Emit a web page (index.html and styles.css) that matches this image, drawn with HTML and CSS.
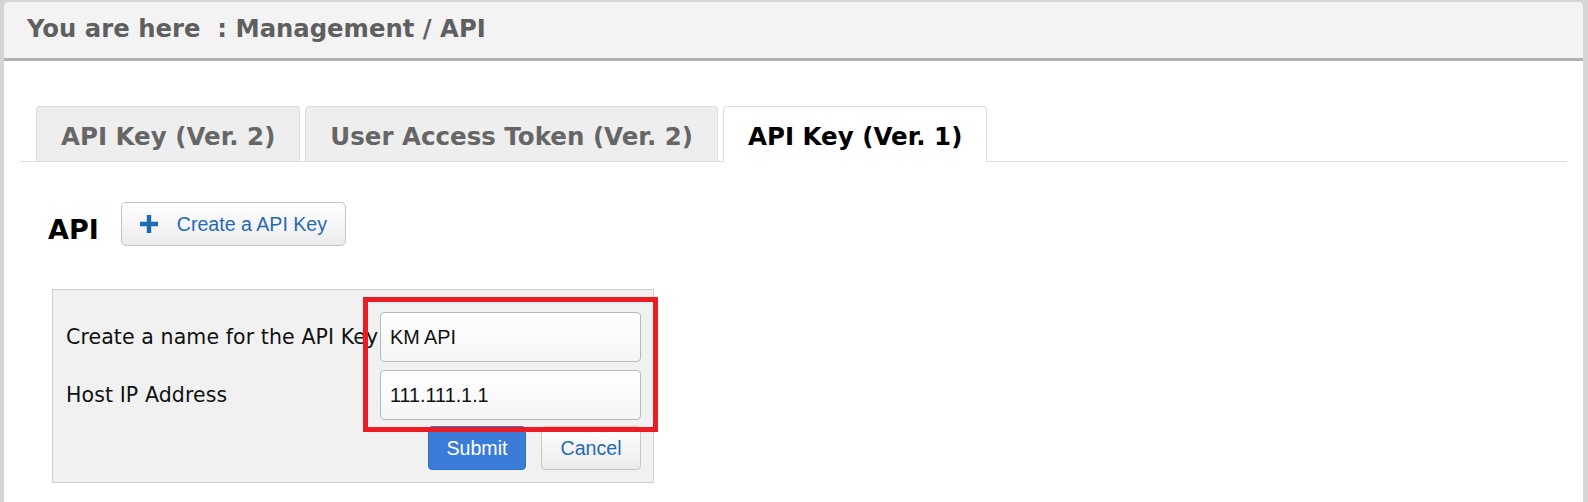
FILE: index.html
```html
<!DOCTYPE html>
<html lang="en">
<head>
<meta charset="utf-8">
<title>Management / API</title>
<link rel="stylesheet" href="styles.css">
</head>
<body>
<div class="frame">
  <div class="breadcrumb">You are here&nbsp; : Management / API</div>
  <div class="content">
    <ul class="tabs">
      <li class="tab">API Key (Ver. 2)</li>
      <li class="tab">User Access Token (Ver. 2)</li>
      <li class="tab active">API Key (Ver. 1)</li>
    </ul>
    <div class="section-head">
      <h2 class="section-title">API</h2>
      <button class="btn btn-create" type="button">
        <svg class="plus" width="18" height="18" viewBox="0 0 18 18" aria-hidden="true"><path d="M6.8 0h4.4v6.8H18v4.4h-6.8V18H6.8v-6.8H0V6.8h6.8z" fill="#1c6cb3"/></svg>
        <span>Create a API Key</span>
      </button>
    </div>
    <div class="form-box">
      <div class="form-grid">
        <label class="form-label" for="k-name">Create a name for the API Key</label>
        <input class="form-input" id="k-name" type="text" value="KM API">
        <label class="form-label" for="k-ip">Host IP Address</label>
        <input class="form-input" id="k-ip" type="text" value="111.111.1.1">
      </div>
      <div class="actions">
        <button class="btn btn-submit" type="button">Submit</button>
        <button class="btn btn-cancel" type="button">Cancel</button>
      </div>
      <div class="highlight"></div>
    </div>
  </div>
</div>
</body>
</html>
```

FILE: styles.css
```css
html, body {
  margin: 0;
  padding: 0;
}
body {
  background: #d5d5d5;
  font-family: "DejaVu Sans", Verdana, sans-serif;
  overflow: hidden;
}
.frame {
  margin: 2px 5px 0 4px;
  min-height: 500px;
  background: #ffffff;
  border-radius: 5px 5px 0 0;
}
.breadcrumb {
  height: 52px;
  padding: 1px 0 3px 23px;
  background: #f3f3f3;
  border-bottom: 3px solid #b3b3b3;
  border-radius: 5px 5px 0 0;
  color: #5f5f5f;
  font-size: 24.3px;
  font-weight: bold;
  line-height: 52px;
  white-space: pre;
}
.content {
  padding: 45px 16px 0 16px;
}
.tabs {
  display: flex;
  gap: 5px;
  margin: 0;
  padding: 0 0 0 16px;
  list-style: none;
  border-bottom: 1px solid #dddddd;
}
.tab {
  box-sizing: border-box;
  height: 55px;
  padding: 5px 24px 0 24px;
  background: #eeeeee;
  border: 1px solid #dddddd;
  border-bottom: none;
  border-radius: 4px 4px 0 0;
  color: #666666;
  font-size: 24.5px;
  font-weight: bold;
  line-height: 49px;
  white-space: nowrap;
}
.tab.active {
  height: 56px;
  margin-bottom: -1px;
  background: #ffffff;
  color: #000000;
}
.section-head {
  display: flex;
  align-items: flex-start;
  margin-top: 40px;
  padding-left: 28px;
}
.section-title {
  margin: 12px 22px 0 0;
  color: #000000;
  font-size: 27px;
  font-weight: bold;
  line-height: 32px;
}
.btn {
  box-sizing: border-box;
  font-family: "Liberation Sans", Arial, sans-serif;
  font-size: 19.6px;
  cursor: pointer;
}
.btn-create {
  display: flex;
  align-items: center;
  gap: 19px;
  height: 44px;
  padding: 0 18px 0 18px;
  background: linear-gradient(#ffffff, #ececec);
  border: 1px solid #c4c4c4;
  border-radius: 5px;
  color: #1f6bb5;
}
.plus {
  display: block;
  flex: none;
}
.form-box {
  position: relative;
  width: max-content;
  margin: 43px 0 0 32px;
  padding: 22px 12px 12px 13px;
  background: #f1f1f1;
  border: 1px solid #cfcfcf;
}
.form-grid {
  display: grid;
  grid-template-columns: 314px 261px;
  row-gap: 8px;
  align-items: center;
}
.form-label {
  color: #111111;
  font-size: 20.5px;
  letter-spacing: 0.1px;
  white-space: nowrap;
}
.form-input {
  box-sizing: border-box;
  width: 261px;
  height: 50px;
  margin: 0;
  padding: 0 0 0 9px;
  background: linear-gradient(#ffffff, #f5f5f5);
  border: 1px solid #b9b9b9;
  border-radius: 4px;
  color: #111111;
  font-family: "Liberation Sans", Arial, sans-serif;
  font-size: 19.8px;
  outline: none;
}
.actions {
  display: flex;
  justify-content: flex-end;
  gap: 15px;
  margin-top: 6px;
}
.btn-submit {
  width: 98px;
  height: 44px;
  background: #3b7cd8;
  border: 1px solid #3371c9;
  border-radius: 4px;
  color: #ffffff;
}
.btn-cancel {
  width: 100px;
  height: 44px;
  background: linear-gradient(#ffffff, #ebebeb);
  border: 1px solid #c6c6c6;
  border-radius: 4px;
  color: #1f6bb5;
}
.highlight {
  position: absolute;
  left: 310px;
  top: 7px;
  width: 295px;
  height: 135px;
  box-sizing: border-box;
  border: 5px solid #ed1c24;
  pointer-events: none;
}
```
